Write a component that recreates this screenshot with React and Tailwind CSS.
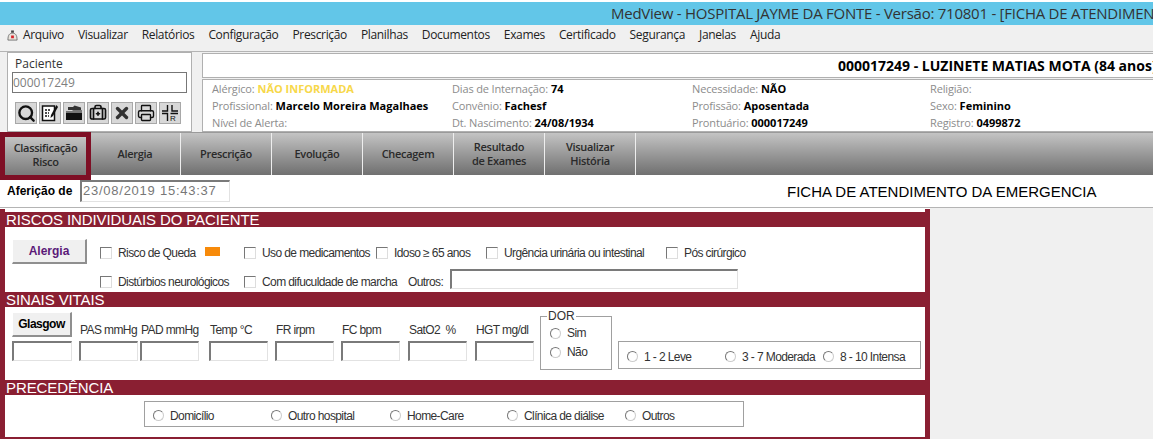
import React from 'react';
import { Search, BriefcaseMedical, X, Printer } from 'lucide-react';

const uiFont = "font-['Open_Sans',sans-serif]";
const formFont = "font-['Liberation_Sans',sans-serif]";

const menus = ['Arquivo', 'Visualizar', 'Relatórios', 'Configuração', 'Prescrição', 'Planilhas', 'Documentos', 'Exames', 'Certificado', 'Segurança', 'Janelas', 'Ajuda'];

const tabs = [
  ['Alergia'],
  ['Prescrição'],
  ['Evolução'],
  ['Checagem'],
  ['Resultado', 'de Exames'],
  ['Visualizar', 'História'],
];

const AppLogo = ({ size = 12 }) => (
  <svg width={size} height={size} viewBox="0 0 12 12">
    <rect x="4.5" y="0.5" width="3" height="2.5" fill="#444" />
    <path d="M1 11 C1 5 3 3.5 6 3.5 C9 3.5 11 5 11 11 Z" fill="#e8e4dc" stroke="#555" strokeWidth="0.8" />
    <rect x="4.5" y="6" width="3" height="3" fill="#d8232a" />
  </svg>
);

const NotesIcon = () => (
  <svg width="18" height="18" viewBox="0 0 18 18" fill="none" stroke="#111">
    <rect x="1.5" y="2" width="12" height="14.5" fill="#fff" strokeWidth="1.5" />
    <path d="M4 6h5M4 9h4M4 12h4" strokeWidth="1.5" strokeDasharray="2 1" />
    <path d="M15.5 1 L10 11 L9.5 14 L12 12 L17 3 Z" fill="#111" stroke="none" />
  </svg>
);

const FolderIcon = () => (
  <svg width="18" height="18" viewBox="0 0 18 18">
    <path d="M3 6 L3 3 L8 3 L9.5 1.5 L16 3.5 L16 6 Z" fill="#333" />
    <path d="M1 7 H7 L8 6 H17 V9 H1 Z" fill="#777" />
    <path d="M1 9 H17 V16 H1 Z" fill="#111" />
  </svg>
);

const CrossRIcon = () => (
  <svg width="18" height="18" viewBox="0 0 18 18" fill="none" stroke="#111" strokeWidth="1.4">
    <path d="M6.5 1 V7 H1 M11 1 V7 H17 M1 9.5 H6.5 V17 M9.5 9.5 H17" />
    <text x="9" y="17" fontSize="8" fontFamily="Liberation Sans" stroke="none" fill="#111">R</text>
  </svg>
);

const toolIcons = [
  <Search size={19} strokeWidth={3} color="#111" />,
  <NotesIcon />,
  <FolderIcon />,
  <BriefcaseMedical size={18} strokeWidth={2.2} color="#111" />,
  <X size={18} strokeWidth={4.5} color="#333" />,
  <Printer size={18} strokeWidth={1.8} color="#111" />,
  <CrossRIcon />,
];

const Info = ({ label, value, valueClass = 'text-black' }) => (
  <div className="h-[17px] leading-[17px] whitespace-nowrap">
    <span className="text-[#8c8c8c] tracking-[-0.15px]">{label}</span>{' '}
    <span className={`font-bold ${valueClass}`}>{value}</span>
  </div>
);

const Sunken = ({ className = '', children }) => (
  <div className={`bg-white border-t-2 border-l-2 border-t-[#7a7a7a] border-l-[#7a7a7a] border-b border-r border-b-[#e2e2e2] border-r-[#e2e2e2] ${className}`}>{children}</div>
);

const labelText = 'text-[12px] text-[#333] whitespace-nowrap tracking-[-0.6px]';

const Check = ({ label, className = '' }) => (
  <div className={`flex items-center shrink-0 ${className}`}>
    <span className="w-3 h-3 mr-[6px] shrink-0 bg-white border border-t-[#777] border-l-[#777] border-b-[#ddd] border-r-[#ddd]"></span>
    <span className={labelText}>{label}</span>
  </div>
);

const Radio = ({ label, className = '' }) => (
  <div className={`flex items-center shrink-0 ${className}`}>
    <span className="w-[11px] h-[11px] mr-[6px] shrink-0 rounded-full bg-white border border-t-[#777] border-l-[#777] border-b-[#ccc] border-r-[#ccc]"></span>
    <span className={labelText}>{label}</span>
  </div>
);

const Banner = ({ children }) => (
  <div className="h-[15px] bg-[#8a1f32] text-white text-[15px] leading-[15px] pl-[1px] tracking-[-0.1px]">{children}</div>
);

const RaisedButton = ({ className = '', children }) => (
  <div className={`flex items-center justify-center bg-[#f0f0f0] border border-t-white border-l-white border-b-2 border-r-2 border-b-[#8f8f8f] border-r-[#8f8f8f] text-[12px] font-bold ${className}`}>{children}</div>
);

const Vital = ({ label, className = 'w-[59px]' }) => (
  <div className={`flex flex-col shrink-0 ${className}`}>
    <div className="h-[29px] pt-[11px] text-[12px] leading-[14px] text-[#333] whitespace-pre tracking-[-0.6px] pl-[1px]">{label}</div>
    <Sunken className="h-5" />
  </div>
);

export default function App() {
  return (
    <div className={`w-[1153px] h-[439px] overflow-hidden bg-white ${uiFont}`}>
      {/* Title bar */}
      <div className="mt-[2px] h-[23px] bg-[#62c6e8] flex items-center pl-[3px] overflow-hidden">
        <AppLogo />
        <div className="ml-[596px] pl-[12px] text-[15px] text-[#333] whitespace-nowrap tracking-[-0.25px]">MedView - HOSPITAL JAYME DA FONTE - Versão: 710801 - [FICHA DE ATENDIMENTO DA EMERGENCIA]</div>
      </div>

      {/* Menu */}
      <div className="h-[27px] bg-[#f0f0f0] flex items-center pl-[7px] pb-[6px] border-b border-b-[#b4b4b4]">
        <AppLogo size={11} />
        <div className="ml-[5px] flex gap-[14px] text-[12px] text-[#222] tracking-[-0.35px]">
          {menus.map((m) => <span key={m}>{m}</span>)}
        </div>
      </div>

      {/* Patient header */}
      <div className="h-[80px] bg-[#f0f0f0] flex pl-[7px]">
        <div className="w-[185px] bg-white border border-[#b0b0b0] pt-[3px] pl-[4px]">
          <div className="pl-[3px] text-[12px] leading-[16px] text-[#333]">Paciente</div>
          <div className="w-[175px] h-[21px] border border-[#777] text-[12px] leading-[19px] text-[#808080] mb-[9px]">000017249</div>
          <div className="pl-[3px] flex gap-[2px]">
            {toolIcons.map((icon, i) => (
              <div key={i} className="w-[22px] h-[22px] flex items-center justify-center bg-[#d8d8d8] border border-[#a8a8a8]">{icon}</div>
            ))}
          </div>
        </div>
        <div className="ml-[10px] flex-1 flex flex-col min-w-0">
          <div className="h-[25px] mt-[1px] bg-white border border-[#b0b0b0] border-r-0 pl-[635px] text-[14px] leading-[23px] font-bold text-black whitespace-nowrap overflow-hidden">000017249 - LUZINETE MATIAS MOTA (84 anos)</div>
          <div className="h-[54px] mt-[1px] bg-white border border-[#b0b0b0] border-r-0 pl-[9px] text-[11px] grid grid-cols-[240px_240px_238px_1fr]">
            <div>
              <Info label="Alérgico:" value="NÃO INFORMADA" valueClass="text-[#f7d84a]" />
              <Info label="Profissional:" value="Marcelo Moreira Magalhaes" />
              <Info label="Nível de Alerta:" value="" />
            </div>
            <div>
              <Info label="Dias de Internação:" value="74" />
              <Info label="Convênio:" value="Fachesf" />
              <Info label="Dt. Nascimento:" value="24/08/1934" />
            </div>
            <div>
              <Info label="Necessidade:" value="NÃO" />
              <Info label="Profissão:" value="Aposentada" />
              <Info label="Prontuário:" value="000017249" />
            </div>
            <div>
              <Info label="Religião:" value="" />
              <Info label="Sexo:" value="Feminino" />
              <Info label="Registro:" value="0499872" />
            </div>
          </div>
        </div>
      </div>

      {/* Tabs */}
      <div className="relative z-10 h-[43px] flex items-start bg-gradient-to-b from-[#c4c4c4] to-[#707070] border-t border-t-[#9a9a9a] text-[11px] font-semibold text-[#2a2a2a] tracking-[-0.3px]">
        <div className="w-[91px] h-[48px] -mt-[1px] -mr-[1px] shrink-0 border-[5px] border-[#7e0f25] bg-gradient-to-b from-[#c4c4c4] to-[#7a7a7a] flex flex-col items-center justify-center pb-[3px] leading-[14px] text-center">
          <span>Classificação</span>
          <span>Risco</span>
        </div>
        {tabs.map((t) => (
          <div key={t[0]} className="w-[91px] h-[42px] shrink-0 border-r border-r-[#eeeeee] flex flex-col items-center justify-center leading-[14px] text-center">
            {t.map((line) => <span key={line}>{line}</span>)}
          </div>
        ))}
      </div>

      {/* Aferição */}
      <div className="h-[33px] flex items-start border-b border-b-[#b4b4b4]">
        <div className={`pl-[7px] w-[80px] mt-[9px] text-[12px] leading-[14px] font-bold text-black whitespace-nowrap ${formFont}`}>Aferição de</div>
        <Sunken className="w-[150px] h-[22px] mt-[5px] pl-[1px] text-[13px] leading-[18px] text-[#777] tracking-[0.75px] font-['Liberation_Sans',sans-serif] whitespace-nowrap">23/08/2019 15:43:37</Sunken>
        <div className={`ml-[557px] mt-[9px] text-[15px] leading-[16px] text-black whitespace-nowrap ${formFont}`}>FICHA DE ATENDIMENTO DA EMERGENCIA</div>
      </div>

      {/* Form + side panel */}
      <div className={`flex h-[231px] ${formFont}`}>
        <div className="w-[930px] shrink-0 mt-[1px] border-x-[5px] border-x-[#8a1f32] border-b-2 border-b-[#8a1f32] bg-white pt-[3px] h-[230px]">
          <Banner>RISCOS INDIVIDUAIS DO PACIENTE</Banner>

          <div className="h-[65px]">
            <div className="flex items-start pt-[12px] pl-[7px]">
              <RaisedButton className="w-[75px] h-[25px] text-[#5b1a78]">Alergia</RaisedButton>
              <Check label="Risco de Queda" className="ml-[13px] w-[105px] h-[28px]" />
              <span className="w-[15px] h-[9px] mt-[8px] bg-[#f78a0a] shrink-0"></span>
              <Check label="Uso de medicamentos" className="ml-[24px] w-[132px] h-[28px]" />
              <Check label="Idoso ≥ 65 anos" className="w-[110px] h-[28px]" />
              <Check label="Urgência urinária ou intestinal" className="w-[180px] h-[28px]" />
              <Check label="Pós cirúrgico" className="h-[28px]" />
            </div>
            <div className="flex items-center pl-[95px] mt-[2px] h-[20px]">
              <Check label="Distúrbios neurológicos" className="w-[144px] mt-[5px]" />
              <Check label="Com difuculdade de marcha" className="w-[164px] mt-[5px]" />
              <span className={`${labelText} w-[42px] shrink-0 mt-[5px]`}>Outros:</span>
              <Sunken className="w-[288px] h-[20px]" />
            </div>
          </div>

          <Banner>SINAIS VITAIS</Banner>

          <div className="h-[73px] flex items-start pl-[7px]">
            <div className="w-[60px] shrink-0 flex flex-col">
              <RaisedButton className="mt-[5px] h-[25px] text-black tracking-[-0.5px]">Glasgow</RaisedButton>
              <Sunken className="h-5 mt-[4px]" />
            </div>
            <div className="mt-[5px] flex">
              <Vital label="PAS mmHg" className="ml-[7px] w-[59px]" />
              <Vital label="PAD mmHg" className="ml-[2px] w-[59px]" />
              <Vital label="Temp °C" className="ml-[10px] w-[59px]" />
              <Vital label="FR irpm" className="ml-[7px] w-[59px]" />
              <Vital label="FC bpm" className="ml-[7px] w-[59px]" />
              <Vital label="SatO2  %" className="ml-[8px] w-[59px]" />
              <Vital label="HGT mg/dl" className="ml-[8px] w-[59px]" />
            </div>
            <fieldset className="ml-[6px] mt-[3px] w-[72px] h-[60px] border border-[#a0a0a0] pl-[9px]">
              <legend className="text-[12px] leading-[12px] text-[#333] -ml-[3px] px-[1px]">DOR</legend>
              <Radio label="Sim" className="mt-[2px]" />
              <Radio label="Não" className="mt-[1px]" />
            </fieldset>
            <div className="ml-[6px] mt-[34px] w-[303px] h-[28px] border border-[#a0a0a0] flex items-center pl-[8px] pt-[3px]">
              <Radio label="1 - 2  Leve" className="w-[98px]" />
              <Radio label="3 - 7 Moderada" className="w-[98px]" />
              <Radio label="8 - 10 Intensa" />
            </div>
          </div>

          <Banner>PRECEDÊNCIA</Banner>

          <div className="pt-[6px] pl-[139px]">
            <div className="w-[600px] h-[26px] border border-[#a0a0a0] flex items-center pl-[8px] pt-[3px]">
              <Radio label="Domicílio" className="w-[118px]" />
              <Radio label="Outro hospital" className="w-[119px]" />
              <Radio label="Home-Care" className="w-[117px]" />
              <Radio label="Clínica de diálise" className="w-[118px]" />
              <Radio label="Outros" />
            </div>
          </div>
        </div>
        <div className="flex-1 bg-[#f0f0f0]"></div>
      </div>
    </div>
  );
}
